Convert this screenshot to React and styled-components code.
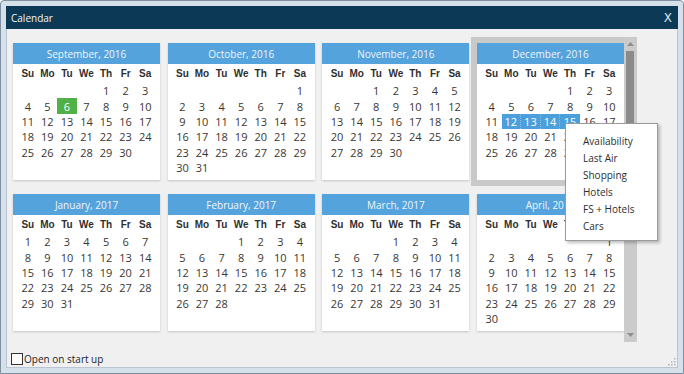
import React from "react";
import styled, { createGlobalStyle } from "styled-components";

const GlobalStyle = createGlobalStyle`
  html, body {
    margin: 0;
    padding: 0;
    background: #ffffff;
  }
  body {
    font-family: "Open Sans", "Noto Sans", sans-serif;
  }
`;

const Frame = styled.div`
  position: relative;
  width: 684px;
  height: 374px;
  box-sizing: border-box;
  border: 1px solid #7d8fa1;
  border-radius: 4px 4px 0 0;
  background: #d5e0ea;
  padding: 5px;
  display: flex;
  flex-direction: column;
`;

const TitleBar = styled.div`
  height: 23px;
  flex: 0 0 23px;
  background: #0c3a56;
  color: #f2f6f9;
  display: flex;
  align-items: center;
  justify-content: space-between;
  padding: 0 0 0 5px;
  font-size: 10px;
`;

const CloseGlyph = styled.span`
  font-family: "DejaVu Sans", sans-serif;
  font-size: 12px;
  color: #d8e2ea;
  margin-right: 6px;
  line-height: 1;
`;

const Body = styled.div`
  position: relative;
  flex: 1;
  background: #f0f0f0;
  border: 1px solid #b9c6d2;
  border-top: none;
  padding: 8px 0 0 6px;
  display: flex;
  flex-direction: column;
`;

const ListArea = styled.div`
  display: flex;
  height: 305px;
`;

const MonthGrid = styled.div`
  display: grid;
  grid-template-columns: repeat(4, 147px);
  column-gap: 7.67px;
  row-gap: 14px;
  padding: 6px 0 0 0;
  align-content: start;
`;

const Card = styled.div`
  width: 147px;
  height: 137px;
  background: #ffffff;
  box-shadow: 0 1px 2px rgba(0, 0, 0, 0.18);
  outline: ${(p) => (p.selected ? "6px solid #c9c9c9" : "none")};
`;

const CardHeader = styled.div`
  height: 21px;
  background: #55a3dc;
  color: #eef5fb;
  font-size: 10px;
  display: flex;
  align-items: center;
  justify-content: center;
`;

const Days = styled.div`
  display: grid;
  grid-template-columns: repeat(7, 1fr);
  grid-auto-rows: 15.4px;
  padding: 0 5px;
`;

const DayName = styled.div`
  height: 19px;
  display: flex;
  align-items: center;
  justify-content: center;
  font-family: "Liberation Sans", Arial, sans-serif;
  font-weight: bold;
  font-size: 10px;
  color: #2f2f2f;
`;

const DayNameRow = styled.div`
  display: grid;
  grid-template-columns: repeat(7, 1fr);
  padding: 0 5px;
`;

const DayCell = styled.div`
  display: flex;
  align-items: center;
  justify-content: center;
  font-size: 11px;
  color: ${(p) => (p.kind ? "#ffffff" : "#3a3632")};
  background: ${(p) =>
    p.kind === "today" ? "#4fb146" : p.kind === "range" ? "#4a9fdc" : "transparent"};
  border-right: ${(p) =>
    p.kind === "range" && !p.last ? "1px dotted rgba(255,255,255,0.35)" : "none"};
`;

const ScrollBar = styled.div`
  width: 13px;
  height: 305px;
  background: #cbcbcb;
  display: flex;
  flex-direction: column;
  align-items: center;
`;

const ScrollArrow = styled.div`
  height: 14px;
  display: flex;
  align-items: center;
  justify-content: center;
`;

const Thumb = styled.div`
  width: 8px;
  height: 72px;
  background: #8b8b8b;
`;

const Track = styled.div`
  flex: 1;
`;

const Footer = styled.label`
  display: flex;
  align-items: center;
  margin: 10px 0 0 -2px;
  font-size: 10px;
  color: #1e1e1e;
`;

const CheckBox = styled.span`
  width: 10px;
  height: 10px;
  border: 1px solid #333;
  background: #fff;
  margin-right: 1px;
`;

const Menu = styled.div`
  position: absolute;
  left: 558px;
  top: 94px;
  width: 93px;
  height: 118px;
  box-sizing: border-box;
  background: #ffffff;
  border: 1px solid #9a9a9a;
  box-shadow: 2px 2px 3px rgba(0, 0, 0, 0.25);
  padding: 9px 0 0 17px;
`;

const MenuItem = styled.div`
  height: 17px;
  line-height: 17px;
  font-size: 10px;
  color: #2e2e2e;
`;

const Grip = styled.svg`
  position: absolute;
  right: 1px;
  bottom: 1px;
`;

const MONTHS = [
  [2016, 8],
  [2016, 9],
  [2016, 10],
  [2016, 11],
  [2017, 0],
  [2017, 1],
  [2017, 2],
  [2017, 3],
];

const NAMES = [
  "January", "February", "March", "April", "May", "June",
  "July", "August", "September", "October", "November", "December",
];

const WEEK = ["Su", "Mo", "Tu", "We", "Th", "Fr", "Sa"];

function markFor(year, month, day) {
  if (year === 2016 && month === 8 && day === 6) return "today";
  if (year === 2016 && month === 11 && day >= 12 && day <= 15) return "range";
  return undefined;
}

const Month = ({ year, month }) => {
  const first = new Date(year, month, 1).getDay();
  const count = new Date(year, month + 1, 0).getDate();
  const cells = [];
  for (let i = 0; i < first; i++) cells.push(<div key={"e" + i} />);
  for (let d = 1; d <= count; d++) {
    cells.push(
      <DayCell key={d} kind={markFor(year, month, d)} last={d === 15}>
        {d}
      </DayCell>
    );
  }
  return (
    <Card selected={year === 2016 && month === 11}>
      <CardHeader>
        {NAMES[month]}, {year}
      </CardHeader>
      <DayNameRow>
        {WEEK.map((w) => (
          <DayName key={w}>{w}</DayName>
        ))}
      </DayNameRow>
      <Days>{cells}</Days>
    </Card>
  );
};

export default function App() {
  return (
    <>
      <GlobalStyle />
      <Frame>
        <TitleBar>
          <span>Calendar</span>
          <CloseGlyph>X</CloseGlyph>
        </TitleBar>
        <Body>
          <ListArea>
            <MonthGrid>
              {MONTHS.map(([y, m]) => (
                <Month key={y + "-" + m} year={y} month={m} />
              ))}
            </MonthGrid>
            <ScrollBar>
              <ScrollArrow>
                <svg width="7" height="4" viewBox="0 0 7 4">
                  <path d="M0 4 L3.5 0 L7 4 Z" fill="#8e8e8e" />
                </svg>
              </ScrollArrow>
              <Thumb />
              <Track />
              <ScrollArrow>
                <svg width="7" height="4" viewBox="0 0 7 4">
                  <path d="M0 0 L3.5 4 L7 0 Z" fill="#8e8e8e" />
                </svg>
              </ScrollArrow>
            </ScrollBar>
          </ListArea>
          <Footer>
            <CheckBox />
            Open on start up
          </Footer>
          <Menu>
            {["Availability", "Last Air", "Shopping", "Hotels", "FS + Hotels", "Cars"].map(
              (t) => (
                <MenuItem key={t}>{t}</MenuItem>
              )
            )}
          </Menu>
          <Grip width="9" height="9" viewBox="0 0 9 9">
            {[
              [7, 1], [7, 4], [4, 4], [7, 7], [4, 7], [1, 7],
            ].map(([x, y]) => (
              <rect key={x + "-" + y} x={x} y={y} width="1.5" height="1.5" fill="#a9b4bf" />
            ))}
          </Grip>
        </Body>
      </Frame>
    </>
  );
}
